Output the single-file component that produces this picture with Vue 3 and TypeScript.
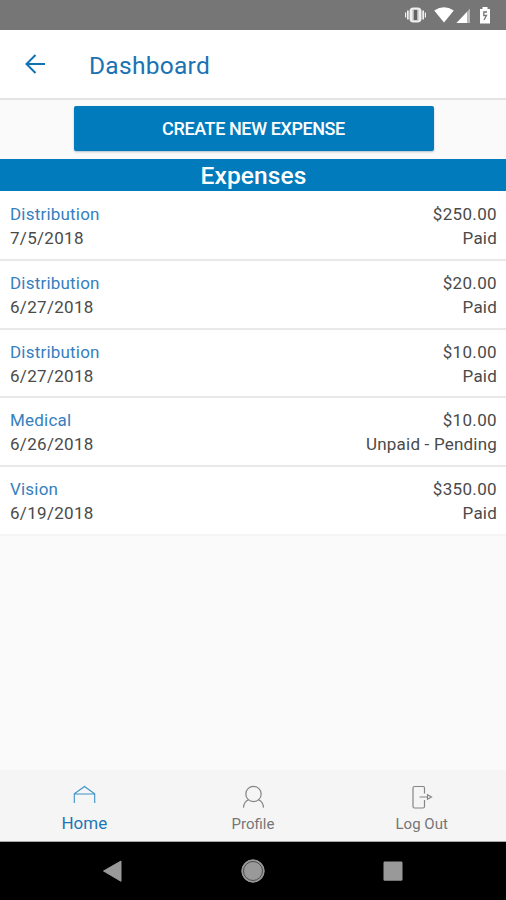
<script setup lang="ts">
interface Expense {
  id: number
  category: string
  date: string
  amount: string
  status: string
}

const expenses: Expense[] = [
  { id: 1, category: 'Distribution', date: '7/5/2018', amount: '$250.00', status: 'Paid' },
  { id: 2, category: 'Distribution', date: '6/27/2018', amount: '$20.00', status: 'Paid' },
  { id: 3, category: 'Distribution', date: '6/27/2018', amount: '$10.00', status: 'Paid' },
  { id: 4, category: 'Medical', date: '6/26/2018', amount: '$10.00', status: 'Unpaid - Pending' },
  { id: 5, category: 'Vision', date: '6/19/2018', amount: '$350.00', status: 'Paid' },
]
</script>

<template>
  <div class="screen">
    <div class="status-bar">
      <svg class="status-icons" width="90" height="20" viewBox="0 0 90 20">
        <g fill="#f0f0f0">
          <rect x="8.5" y="2.5" width="12" height="15" rx="4" />
          <rect x="6" y="5.5" width="1.7" height="9" />
          <rect x="4" y="7.5" width="1.2" height="5" />
          <rect x="21.3" y="5.5" width="1.7" height="9" />
          <rect x="23.8" y="7.5" width="1.2" height="5" />
        </g>
        <rect x="11.5" y="4.5" width="6" height="11" fill="#b5b5b5" />
        <rect x="13" y="5" width="3" height="10" fill="#626262" />
        <path d="M33.2 5.5Q43 -1 52.8 5.5L43 17.5Z" fill="#fff" />
        <path d="M55.5 18 69 3.5V18Z" fill="#b9b9b9" />
        <path d="M55.5 18 66 7V18Z" fill="#fff" />
        <path d="M79 4h2.5V2h5v2H89v14.5H79Z" fill="#fff" />
        <path d="M86 7H82.8V10.5H85.5L83 15" fill="none" stroke="#777" stroke-width="1.3" />
      </svg>
    </div>

    <header class="header">
      <svg class="back" width="22" height="22" viewBox="0 0 22 22" fill="none" stroke="#1172b3" stroke-width="2">
        <path d="M21 11H2.5M11.5 2 2.5 11l9 9" />
      </svg>
      <h1 class="title">Dashboard</h1>
    </header>

    <main class="content">
      <div class="action">
        <button class="create" type="button"><span>CREATE NEW EXPENSE</span></button>
      </div>
      <h2 class="banner"><span>Expenses</span></h2>
      <ul class="list">
        <li v-for="e in expenses" :key="e.id" class="row">
          <div class="line">
            <span class="category">{{ e.category }}</span>
            <span class="amount">{{ e.amount }}</span>
          </div>
          <div class="line">
            <span class="date">{{ e.date }}</span>
            <span class="state">{{ e.status }}</span>
          </div>
        </li>
      </ul>
    </main>

    <nav class="tabs">
      <a class="tab active">
        <svg width="26" height="26" viewBox="0 0 26 26" fill="none" stroke="#3c93c6" stroke-width="1.1">
          <path d="M3.3 21V11.8L13.5 4.5 23.7 11.8V21M3.3 12h20.4" />
        </svg>
        <span>Home</span>
      </a>
      <a class="tab">
        <svg width="26" height="26" viewBox="0 0 26 26" fill="none" stroke="#858585" stroke-width="1.2">
          <ellipse cx="13.5" cy="12" rx="7.7" ry="7.6" />
          <path d="M8.5 17.7Q3.8 19.7 3.5 25.6M18.5 17.7Q23.2 19.7 23.5 25.6" />
        </svg>
        <span>Profile</span>
      </a>
      <a class="tab">
        <svg width="26" height="26" viewBox="0 0 26 26" fill="none" stroke="#858585" stroke-width="1.2">
          <path d="M15.5 11.5V6Q15.5 4.5 14 4.5H5.5Q4 4.5 4 6V24.5Q4 26 5.5 26H14Q15.5 26 15.5 24.5V18M10.5 15H18.5M18.5 12.7 22.5 15 18.5 17.3Z" />
        </svg>
        <span>Log Out</span>
      </a>
    </nav>

    <div class="system-nav">
      <svg width="24" height="24" viewBox="0 0 24 24">
        <path d="M3.5 12 21 2V22.3Z" fill="#999" stroke="#999" stroke-linejoin="round" />
      </svg>
      <svg width="24" height="24" viewBox="0 0 24 24">
        <circle cx="12" cy="12" r="11.2" fill="#999" stroke="#999" />
        <circle cx="12" cy="12" r="9.5" fill="#999" stroke="#444" stroke-width="0.9" />
      </svg>
      <svg width="24" height="24" viewBox="0 0 24 24">
        <rect x="2.5" y="2.5" width="19" height="19.2" rx="1.2" fill="#999" />
      </svg>
    </div>
  </div>
</template>

<style>
body {
  margin: 0;
}
</style>

<style scoped>
.screen {
  display: flex;
  flex-direction: column;
  width: 506px;
  height: 900px;
  overflow: hidden;
  background: #fafafa;
  font-family: Roboto, "Liberation Sans", sans-serif;
}
.status-bar {
  display: flex;
  justify-content: flex-end;
  box-sizing: border-box;
  height: 30px;
  padding: 5px 15px 0 0;
  background: #767676;
}
.header {
  display: flex;
  align-items: center;
  box-sizing: border-box;
  height: 70px;
  padding-left: 24px;
  background: #fff;
  border-bottom: 2px solid #e4e4e4;
}
.title {
  margin: 2px 0 0 43px;
  color: #1a72b4;
  font-size: 24.5px;
  font-weight: 400;
  letter-spacing: 0.28px;
}
.content {
  flex: 1;
}
.action {
  display: flex;
  justify-content: center;
  padding: 6px 0 8px;
}
.create {
  width: 360px;
  height: 44.5px;
  margin-left: 1px;
  padding: 0;
  border: 0;
  border-radius: 2px;
  background: #027bbc;
  box-shadow: 0 1px 2px rgba(0, 60, 100, 0.3);
  color: #fff;
  font-family: inherit;
  font-size: 18px;
  font-weight: 500;
  letter-spacing: -0.4px;
}
.banner {
  display: flex;
  align-items: center;
  justify-content: center;
  box-sizing: border-box;
  height: 32.5px;
  margin: 0;
  padding: 2px 0 0 1px;
  background: #027bbc;
  color: #fff;
  font-size: 24.5px;
  font-weight: 500;
  letter-spacing: 0.1px;
}
.list {
  margin: 0;
  padding: 1px 0 0;
  background: #fff;
  list-style: none;
}
.row {
  box-sizing: border-box;
  height: 68.8px;
  padding: 10px 9px 0 10px;
  background: #fff;
  border-bottom: 2px solid #e9e9e9;
}
.row:last-child {
  border-bottom-color: #f5f5f5;
}
.line {
  display: flex;
  justify-content: space-between;
  height: 24px;
  color: #4a4a4a;
  font-size: 17px;
  line-height: 24px;
  letter-spacing: 0.2px;
}
.category {
  color: #3580be;
}
.date {
  letter-spacing: 0.3px;
}
.amount {
  letter-spacing: 0.35px;
}
.tabs {
  display: flex;
  box-sizing: border-box;
  height: 72px;
  padding-top: 12px;
  background: #f5f5f5;
  border-bottom: 1px solid #aaa;
}
.tab {
  display: flex;
  flex: 1;
  flex-direction: column;
  align-items: center;
  color: #767676;
  font-size: 15px;
  line-height: 20px;
}
.tab svg {
  overflow: visible;
}
.tab span {
  margin-top: 6px;
}
.active {
  color: #1d75b5;
  font-size: 17px;
}
.active span {
  margin-top: 5px;
}
.system-nav {
  display: flex;
  justify-content: space-between;
  box-sizing: border-box;
  height: 58px;
  padding: 17px 101px 0 100px;
  background: #000;
}
</style>
